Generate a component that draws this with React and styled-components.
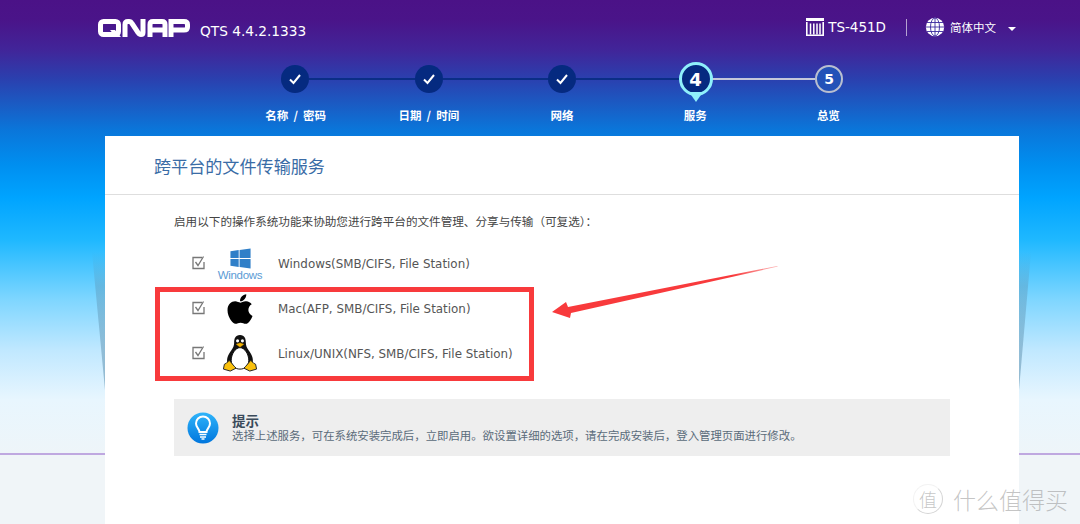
import React from 'react';
import styled, { createGlobalStyle } from 'styled-components';
import { FaApple, FaWindows } from 'react-icons/fa';

const Global = createGlobalStyle`
  html, body { margin: 0; padding: 0; }
  body { font-family: "DejaVu Sans", "Noto Sans CJK SC", sans-serif; }
`;

const CJK = `"Noto Sans CJK SC", "Noto Sans", sans-serif`;

const Page = styled.div`
  position: relative;
  width: 1080px;
  height: 524px;
  overflow: hidden;
  background: linear-gradient(180deg,
    #4b1287 0, #4a1489 20px, #412599 50px, #2b3fae 78px, #1a5cc4 105px, #0a76da 130px,
    #008ff0 165px, #00a4ff 198px, #1fb8ff 240px, #7fd6ff 300px, #c0e8ff 350px,
    #e8f6fe 400px, #eef5f9 453px, #bfa8e0 453px, #bfa8e0 455px, #f0f5f8 455px, #f0f5f8 524px);
`;

const Wedge = styled.div`
  position: absolute;
  top: 252px;
  width: ${p => (p.$right ? '12px' : '13px')};
  height: 138px;
  left: ${p => (p.$right ? '1019px' : '92px')};
  background: linear-gradient(180deg, rgba(90,140,170,0), rgba(90,140,170,.35) 25%, rgba(90,140,170,.55));
  clip-path: ${p => (p.$right
    ? 'polygon(0 0, 100% 0, 0 100%)'
    : 'polygon(0 0, 100% 0, 100% 100%)')};
`;

const Header = styled.header`
  display: flex;
  align-items: center;
  height: 54px;
  padding-left: 98px;
  color: #fff;
`;

const Logo = styled.svg`
  width: 92px;
  height: 18px;
  margin-top: 1px;
`;

const Version = styled.span`
  margin-left: 10px;
  margin-top: 8px;
  font-family: "DejaVu Sans", sans-serif;
  font-size: 13.7px;
`;

const HeaderRight = styled.div`
  display: flex;
  align-items: center;
  margin-left: auto;
  padding-right: 64px;
`;

const Model = styled.span`
  margin-left: 4px;
  font-size: 13.5px;
`;

const Divider = styled.span`
  width: 1px;
  height: 17px;
  margin: 0 18px 0 20px;
  background: rgba(255,255,255,.6);
`;

const LangText = styled.span`
  margin-left: 5px;
  font-family: ${CJK};
  font-size: 11.5px;
`;

const Caret = styled.span`
  width: 0;
  height: 0;
  margin-left: 12px;
  margin-top: 3px;
  border-left: 4px solid transparent;
  border-right: 4px solid transparent;
  border-top: 4px solid #fff;
`;

const Main = styled.div`
  margin-left: 105px;
  width: 914px;
`;

const Stepper = styled.div`
  height: 82px;
  padding-top: 8px;
  box-sizing: border-box;
`;

const Track = styled.div`
  display: flex;
  align-items: center;
  width: 562px;
  margin: 0 auto;
`;

const Circle = styled.div`
  position: relative;
  flex: none;
  display: flex;
  align-items: center;
  justify-content: center;
  box-sizing: border-box;
  width: 28px;
  height: 28px;
  border-radius: 50%;
  color: #fff;
  font-weight: 700;
  font-size: 14px;
  background: ${p => (p.$state === 'todo' ? '#2352b8' : '#052a80')};
  border: ${p => (p.$state === 'todo' ? '2px solid #b9bfd0' : 'none')};
`;

const ActiveCircle = styled(Circle)`
  width: 34px;
  height: 34px;
  margin: 0 -3px;
  z-index: 1;
  font-size: 18px;
  background: #052a80;
  border: 3px solid #8ff0fb;
  &::after {
    content: '';
    position: absolute;
    left: 50%;
    top: 27px;
    margin-left: -7px;
    border-left: 7px solid transparent;
    border-right: 7px solid transparent;
    border-top: 10px solid #8ff0fb;
  }
`;

const Line = styled.div`
  flex: 1;
  height: 2px;
  background: ${p => (p.$done ? '#0a2e86' : '#c3c8da')};
`;

const Labels = styled.div`
  display: grid;
  grid-template-columns: repeat(5, 133.2px);
  justify-content: center;
  margin-top: 10px;
`;

const Label = styled.span`
  text-align: center;
  color: #fff;
  font-family: ${CJK};
  font-weight: 700;
  font-size: 11.5px;
  line-height: 18px;
  word-spacing: 2.5px;
`;

const Card = styled.main`
  height: 388px;
  background: #fff;
`;

const CardHead = styled.div`
  display: flex;
  align-items: center;
  height: 57px;
  padding: 1px 0 0 49px;
  border-bottom: 1px solid #dedede;
`;

const Title = styled.h1`
  margin: 0;
  color: #3a6ca6;
  font-family: ${CJK};
  font-weight: 400;
  font-size: 17.1px;
`;

const Body = styled.div`
  padding: 17px 69px 0;
`;

const Intro = styled.p`
  margin: 0;
  color: #444;
  font-family: ${CJK};
  font-size: 11.6px;
  line-height: 18px;
`;

const Rows = styled.div`
  margin-top: 11px;
  display: flex;
  flex-direction: column;
`;

const Row = styled.div`
  display: flex;
  align-items: center;
  height: 45px;
  padding-left: 16px;
`;

const IconCell = styled.div`
  flex: none;
  width: 48px;
  margin: 0 14px 0 10px;
  display: flex;
  flex-direction: column;
  align-items: center;
`;

const WinWord = styled.span`
  color: #5b9bd5;
  font-family: "Liberation Sans", sans-serif;
  font-size: 11.5px;
  line-height: 11px;
  letter-spacing: -.3px;
`;

const RowText = styled.span`
  color: #555;
  font-size: 11.9px;
`;

const Tip = styled.div`
  display: flex;
  align-items: center;
  height: 57px;
  margin-top: 23px;
  width: 776px;
  padding-left: 13px;
  box-sizing: border-box;
  background: #eeeeee;
`;

const TipText = styled.div`
  margin-left: 13px;
  font-family: ${CJK};
`;

const TipTitle = styled.div`
  color: #3a4a5a;
  font-weight: 700;
  font-size: 13.5px;
  line-height: 15px;
`;

const TipBody = styled.div`
  color: #5a6b7a;
  font-size: 11.4px;
  line-height: 15px;
`;

const RedBox = styled.div`
  position: absolute;
  left: 155px;
  top: 287px;
  width: 379px;
  height: 94px;
  box-sizing: border-box;
  border: 5px solid #f83a3c;
`;

const Arrow = styled.svg`
  position: absolute;
  left: 545px;
  top: 260px;
  width: 240px;
  height: 65px;
`;

const Watermark = styled.div`
  position: absolute;
  left: 913px;
  top: 484px;
  display: flex;
  align-items: center;
  color: rgba(140,140,140,.5);
  font-family: ${CJK};
  font-weight: 300;
`;

const Seal = styled.span`
  width: 28px;
  height: 28px;
  display: flex;
  align-items: center;
  justify-content: center;
  border: 1px solid rgba(170,170,170,.5);
  border-left-color: rgba(170,170,170,.15);
  border-top-color: rgba(170,170,170,.15);
  border-radius: 50%;
  font-size: 18px;
`;

const WatermarkText = styled.span`
  margin-left: 10px;
  font-size: 23px;
  line-height: 28px;
`;

const Check = () => (
  <svg width="16" height="16" viewBox="0 1.5 16 16">
    <path d="M14 7.5V14H3V3h9" fill="none" stroke="#777" strokeWidth="1.3" />
    <path d="M5.5 7.5 8 11l5.5-9" fill="none" stroke="#777" strokeWidth="1.3" />
  </svg>
);

const StepCheck = () => (
  <svg width="14" height="14" viewBox="0 0 14 14">
    <path d="M2 7.5 5.5 11 12 3" fill="none" stroke="#fff" strokeWidth="2" />
  </svg>
);

const QnapLogo = () => (
  <Logo viewBox="0 0 92 18">
    <g fill="none" stroke="#fff" strokeWidth="5">
      <rect x="2.5" y="2.5" width="18" height="13" rx="3" />
      <path d="M27 18V5.500q0-3 3-3h1q2 0 3 2l6 9q1 2 3 2h0q2 0 2-2V0" />
      <path d="M52 18V5.500q0-3 3-3h9q3 0 3 3V18M52 11h15" />
      <path d="M73 18V2.500h13q3.500 0 3.500 3v2.500q0 3-3.500 3H73" />
    </g>
    <path d="M12 11l6 7h5l-6-7z" fill="#fff" />
  </Logo>
);

const NasIcon = () => (
  <svg width="18" height="18" viewBox="0 0 18 18">
    <path d="M0 0h18v3H0zM0 4h1.600v14H0zM16.400 4H18v14h-1.600zM0 16.500h18V18H0z" fill="#fff" />
    <path d="M4.500 5.500v11M7.800 5.500v11M11 5.500v11M14 5.500v11" stroke="#fff" strokeWidth="1.500" />
  </svg>
);

const Globe = () => (
  <svg width="20" height="20" viewBox="0 0 20 20">
    <circle cx="10" cy="10" r="9.200" fill="#fff" />
    <g fill="none" stroke="#3a2a9e" strokeWidth=".9">
      <ellipse cx="10" cy="10" rx="4.500" ry="9" />
      <path d="M10 1v18M1 10h18M2 5.500h16M2 14.500h16" />
    </g>
  </svg>
);

const Tux = () => (
  <svg width="36" height="39" viewBox="0 0 36 40">
    <path d="M18 1c-5 0-6 4-6 8 0 3-1 5-3 8-3 4-5 8-4 13l26 0c1-5-1-9-4-13-2-3-3-5-3-8 0-4-1-8-6-8z" fill="#111" />
    <path d="M18 14c-5 0-9 7-9 13 0 6 4 9 9 9s9-3 9-9c0-6-4-13-9-13z" fill="#fff" stroke="#111" strokeWidth="1" />
    <circle cx="15.500" cy="7" r="1.600" fill="#fff" />
    <circle cx="20.500" cy="7" r="1.600" fill="#fff" />
    <path d="M14 10.500 18 9l4 1.500-4 3z" fill="#f5b400" stroke="#a87800" strokeWidth=".4" />
    <path d="M7 27l5 6 2 2-6 3-7-2 1-5 2-1z" fill="#f9c00c" stroke="#222" strokeWidth="1" />
    <path d="M29 27l-5 6-2 2 6 3 7-2-1-5-2-1z" fill="#f9c00c" stroke="#222" strokeWidth="1" />
  </svg>
);

const Bulb = () => (
  <svg width="32" height="32" viewBox="0 0 32 32">
    <defs>
      <linearGradient id="bulbBg" x1="0" y1="0" x2="0" y2="1">
        <stop offset="0" stopColor="#2fb4fa" />
        <stop offset="1" stopColor="#0076dd" />
      </linearGradient>
    </defs>
    <circle cx="16" cy="16" r="15.500" fill="url(#bulbBg)" />
    <path d="M12.500 20c0-3-3.500-4.500-3.500-8.500a7 7 0 0 1 14 0c0 4-3.500 5.500-3.500 8.500z" fill="none" stroke="#fff" strokeWidth="2" />
    <path d="M12.500 22.500h7M13 25h6M14.500 27h3" stroke="#fff" strokeWidth="1.300" />
  </svg>
);

const steps = ['名称 / 密码', '日期 / 时间', '网络', '服务', '总览'];

const services = [
  { name: 'Windows(SMB/CIFS, File Station)', icon: <><FaWindows size={23} color="#2f7fc8" /><WinWord>Windows</WinWord></> },
  { name: 'Mac(AFP, SMB/CIFS, File Station)', icon: <FaApple size={34} color="#000" /> },
  { name: 'Linux/UNIX(NFS, SMB/CIFS, File Station)', icon: <Tux /> },
];

export default function App() {
  return (
    <Page>
      <Global />
      <Wedge />
      <Wedge $right />
      <Header>
        <QnapLogo />
        <Version>QTS 4.4.2.1333</Version>
        <HeaderRight>
          <NasIcon />
          <Model>TS-451D</Model>
          <Divider />
          <Globe />
          <LangText>简体中文</LangText>
          <Caret />
        </HeaderRight>
      </Header>
      <Main>
        <Stepper>
          <Track>
            <Circle><StepCheck /></Circle>
            <Line $done />
            <Circle><StepCheck /></Circle>
            <Line $done />
            <Circle><StepCheck /></Circle>
            <Line $done />
            <ActiveCircle>4</ActiveCircle>
            <Line />
            <Circle $state="todo">5</Circle>
          </Track>
          <Labels>
            {steps.map(s => <Label key={s}>{s}</Label>)}
          </Labels>
        </Stepper>
        <Card>
          <CardHead><Title>跨平台的文件传输服务</Title></CardHead>
          <Body>
            <Intro>启用以下的操作系统功能来协助您进行跨平台的文件管理、分享与传输（可复选）：</Intro>
            <Rows>
              {services.map(s => (
                <Row key={s.name}>
                  <Check />
                  <IconCell>{s.icon}</IconCell>
                  <RowText>{s.name}</RowText>
                </Row>
              ))}
            </Rows>
            <Tip>
              <Bulb />
              <TipText>
                <TipTitle>提示</TipTitle>
                <TipBody>选择上述服务，可在系统安装完成后，立即启用。欲设置详细的选项，请在完成安装后，登入管理页面进行修改。</TipBody>
              </TipText>
            </Tip>
          </Body>
        </Card>
      </Main>
      <RedBox />
      <Arrow viewBox="0 0 240 65">
        <defs>
          <linearGradient id="arrowFade" x1="0" y1="0" x2="1" y2="0">
            <stop offset="0" stopColor="#f83a3c" />
            <stop offset=".8" stopColor="#f83a3c" />
            <stop offset="1" stopColor="#f83a3c" stopOpacity=".35" />
          </linearGradient>
        </defs>
        <polygon points="7,52 21,42 23,47 232,6 233,6.500 26,53 25,58" fill="url(#arrowFade)" />
      </Arrow>
      <Watermark>
        <Seal>值</Seal>
        <WatermarkText>什么值得买</WatermarkText>
      </Watermark>
    </Page>
  );
}
